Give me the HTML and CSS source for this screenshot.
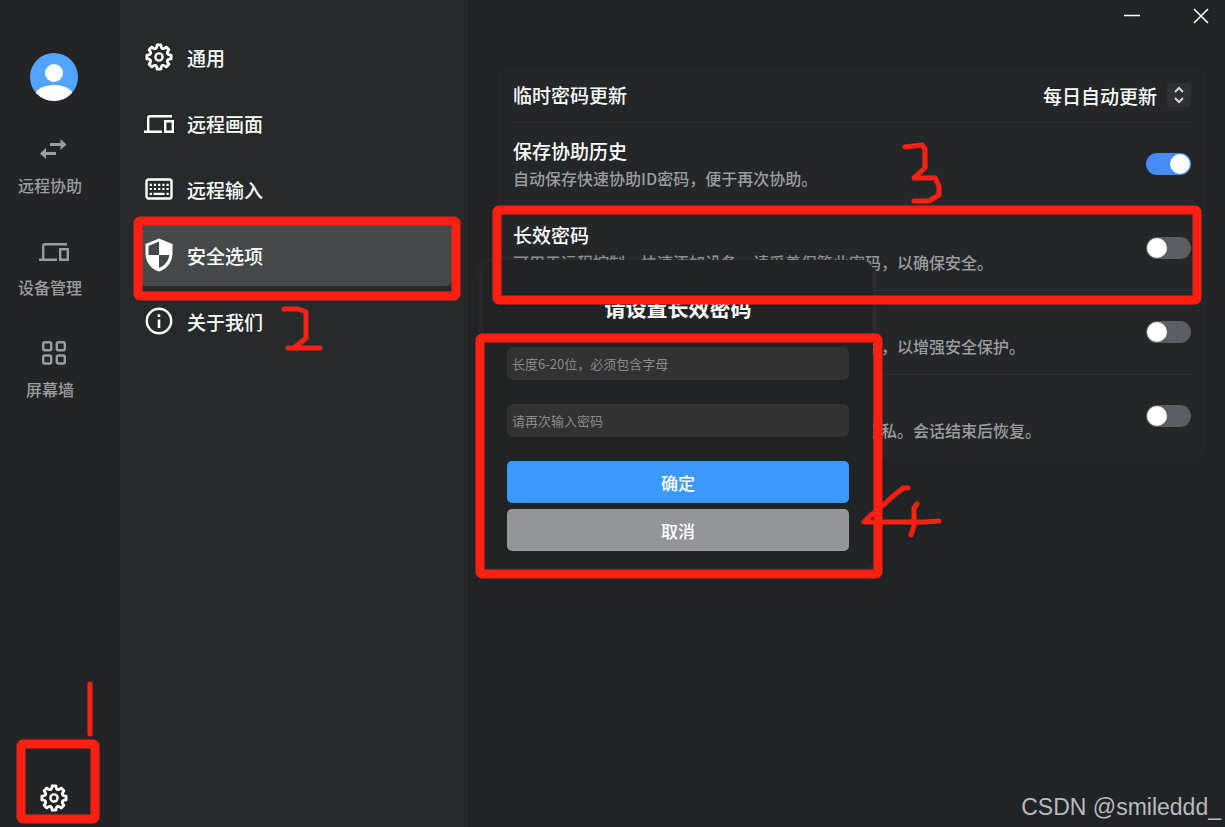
FILE: index.html
```html
<!DOCTYPE html>
<html lang="zh-CN">
<head>
    <meta charset="UTF-8">
    <title>安全选项</title>
    <meta name="viewport" content="width=device-width, initial-scale=1">
    <link rel="stylesheet" href="styles.css">
</head>
<body>
    <svg class="symbols" aria-hidden="true">
        <symbol id="gear" viewBox="-14 -14 28 28">
            <path fill="none" stroke="currentColor" stroke-width="2.800" stroke-linejoin="round" d="M-1.900-12.100H1.900Q2.400-5.800 7.210-9.900L9.900-7.210Q5.800-2.400 12.100-1.900V1.900Q5.800 2.400 9.900 7.210L7.210 9.900Q2.400 5.800 1.900 12.100H-1.900Q-2.400 5.800-7.210 9.900L-9.900 7.210Q-5.800 2.400-12.100 1.900V-1.900Q-5.800-2.400-9.900-7.210L-7.210-9.900Q-2.400-5.800-1.900-12.100Z"/>
            <circle r="3.600" fill="none" stroke="currentColor" stroke-width="2.400"/>
        </symbol>
        <symbol id="devices" viewBox="0 0 30 20">
            <path fill="none" stroke="currentColor" stroke-width="2.400" d="M28 2.200H6Q4.200 2.200 4.200 4V17.800M0 17.800H18M21.200 7.200H28.800V17.800H21.200Z"/>
        </symbol>
    </svg>

    <div class="app">
        <aside class="sidebar">
            <svg class="avatar" viewBox="0 0 48 48">
                <clipPath id="round"><circle cx="24" cy="24" r="24"/></clipPath>
                <g clip-path="url(#round)">
                    <rect width="48" height="48" fill="#52a5ff"/>
                    <circle cx="24" cy="20" r="9" fill="#fff"/>
                    <ellipse cx="24" cy="46" rx="21" ry="14" fill="#fff"/>
                </g>
            </svg>
            <a class="side-link" href="#assist">
                <svg viewBox="0 0 30 28"><path fill="currentColor" d="M11 8H21.500V4L27.500 9.500L21.500 15V11H11ZM17 17H7V13L1 18.500L7 24V20H17Z"/></svg>
                <span>远程协助</span>
            </a>
            <a class="side-link" href="#devices">
                <svg viewBox="0 -5 30 28"><use href="#devices" width="30" height="20"/></svg>
                <span>设备管理</span>
            </a>
            <a class="side-link" href="#wall">
                <svg viewBox="0 0 30 28"><g fill="none" stroke="currentColor" stroke-width="2.400"><rect x="4.200" y="3.200" width="8" height="8" rx="1.500"/><rect x="17.800" y="3.200" width="8" height="8" rx="1.500"/><rect x="4.200" y="16.500" width="8" height="8" rx="1.500"/><rect x="17.800" y="16.500" width="8" height="8" rx="1.500"/></g></svg>
                <span>屏幕墙</span>
            </a>
            <a class="side-settings" href="#settings" aria-label="设置">
                <svg><use href="#gear"/></svg>
            </a>
        </aside>

        <nav class="menu">
            <a href="#general">
                <svg><use href="#gear"/></svg>
                <span>通用</span>
            </a>
            <a href="#screen">
                <svg viewBox="0 -5 30 28"><use href="#devices" width="30" height="20"/></svg>
                <span>远程画面</span>
            </a>
            <a href="#input">
                <svg viewBox="0 0 28 28">
                    <rect x="1.500" y="4.500" width="25" height="19" rx="2" fill="none" stroke="currentColor" stroke-width="2.400"/>
                    <path stroke="currentColor" stroke-width="2.200" stroke-dasharray="2.200 2" d="M4.700 9.800H24M4.700 14H24"/>
                    <path stroke="currentColor" stroke-width="2.200" d="M4.700 18.800H6.900M8.500 18.800H19.500M21.500 18.800H23.700"/>
                </svg>
                <span>远程输入</span>
            </a>
            <a class="active" href="#security">
                <svg class="shield" viewBox="0 0 28 34">
                    <path fill="currentColor" fill-rule="evenodd" d="M14 0.500L27.500 6V15C27.500 24 22 31 14 33.500C6 31 0.500 24 0.500 15V6ZM14 3.500L3.500 8V17H14ZM14 17V30C19.500 28 23.500 23 24.300 17Z"/>
                </svg>
                <span>安全选项</span>
            </a>
            <a href="#about">
                <svg viewBox="0 0 28 28">
                    <circle cx="14" cy="14" r="12.200" fill="none" stroke="currentColor" stroke-width="2.400"/>
                    <path stroke="currentColor" stroke-width="2.600" d="M14 7.300V10M14 12.500V21"/>
                </svg>
                <span>关于我们</span>
            </a>
        </nav>

        <main class="content">
            <header class="titlebar">
                <button type="button" aria-label="最小化"><svg viewBox="0 0 16 16"><path d="M0 7.500H16"/></svg></button>
                <button type="button" aria-label="关闭"><svg viewBox="0 0 16 16"><path d="M1 1L15 15M15 1L1 15"/></svg></button>
            </header>

            <section class="card">
                <div class="row row-short">
                    <label class="title" for="refresh">临时密码更新</label>
                    <div class="picker">
                        <select id="refresh">
                            <option>每日自动更新</option>
                        </select>
                        <svg viewBox="0 0 24 24"><path d="M8 9L12 5L16 9M8 15L12 19L16 15"/></svg>
                    </div>
                </div>
                <div class="row">
                    <label for="history">
                        <span class="title">保存协助历史</span>
                        <span class="desc">自动保存快速协助ID密码，便于再次协助。</span>
                    </label>
                    <input class="switch" type="checkbox" id="history" checked>
                </div>
                <div class="row">
                    <label for="longterm">
                        <span class="title">长效密码</span>
                        <span class="desc">可用于远程控制、快速添加设备。请妥善保管此密码，以确保安全。</span>
                    </label>
                    <input class="switch" type="checkbox" id="longterm">
                </div>
                <div class="row">
                    <label for="verify">
                        <span class="title">二次验证</span>
                        <span class="desc">开启后，首次远程协助时需二次验证陌生的登录设备，以增强安全保护。</span>
                    </label>
                    <input class="switch" type="checkbox" id="verify">
                </div>
                <div class="row">
                    <label for="privacy">
                        <span class="title">隐私屏</span>
                        <span class="desc">远程会话时会自动开启隐私屏，避免旁人偷看保护隐私。会话结束后恢复。</span>
                    </label>
                    <input class="switch" type="checkbox" id="privacy">
                </div>
            </section>

            <form class="dialog">
                <h2>请设置长效密码</h2>
                <input type="password" placeholder="长度6-20位，必须包含字母" aria-label="密码">
                <input type="password" placeholder="请再次输入密码" aria-label="确认密码">
                <button class="confirm" type="submit">确定</button>
                <button class="cancel" type="button">取消</button>
            </form>
        </main>
    </div>

    <!-- step marks drawn over the window -->
    <svg class="marks" aria-hidden="true">
        <rect x="21" y="744" width="74" height="75" rx="2"/>
        <rect x="138" y="221" width="318" height="75" rx="2"/>
        <rect x="497" y="210" width="700" height="90" rx="2"/>
        <rect x="480" y="338" width="398" height="236" rx="2"/>
        <g class="pen">
            <path d="M90 684V734"/>
            <path d="M284 309H298L306 312V338L294 348M288 348H320"/>
            <path d="M905 147L922 145L925 149V168L914 178H935L939 186V195L929 201H914"/>
            <path d="M908 488H903L892 497L880 508L870 516L864 522H924L939 521M917 504L914 508V526L911 535"/>
        </g>
    </svg>
    <div class="watermark">CSDN @smileddd_</div>
</body>
</html>
```
FILE: styles.css
```css
* {
    box-sizing: border-box;
}

body {
    margin: 0;
    background: #202427;
    color: #fff;
    font-family: "Noto Sans CJK SC", sans-serif;
    font-size: 19px;
    font-weight: 500;
}

a {
    color: inherit;
    text-decoration: none;
}

button,
input,
select {
    font-family: inherit;
    font-weight: inherit;
}

.symbols {
    display: none;
}

.app {
    display: grid;
    grid-template-columns: 120px 348px 1fr;
    min-height: 100vh;
}

/* left bar */
.sidebar {
    display: flex;
    flex-direction: column;
    align-items: center;
    padding: 53px 20px 15px 0;
    background: #232426;
}

.avatar {
    width: 48px;
    height: 48px;
    margin: 0 0 34px 8px;
}

.side-link {
    display: flex;
    flex-direction: column;
    align-items: center;
    height: 102px;
    color: #9b9c9d;
    font-size: 16px;
    line-height: 24px;
}

.side-link svg {
    width: 30px;
    height: 28px;
    margin: 0 0 10px 8px;
}

.side-settings {
    margin: auto 0 0 8px;
}

.side-settings svg {
    display: block;
    width: 28px;
    height: 28px;
}

/* settings menu */
.menu {
    display: flex;
    flex-direction: column;
    gap: 4px;
    padding: 26px 16px;
    background: #262a2a;
}

.menu a {
    display: flex;
    align-items: center;
    gap: 13px;
    height: 62px;
    padding-left: 8px;
    border-radius: 6px;
}

.menu a.active {
    background: #454949;
}

.menu svg {
    width: 30px;
    height: 28px;
}

.menu .shield {
    height: 34px;
}

/* right side */
.content {
    position: relative;
    padding: 0 19px 0 30px;
}

.titlebar {
    display: flex;
    justify-content: flex-end;
    gap: 21px;
    height: 68px;
    margin-right: -19px;
}

.titlebar button {
    width: 48px;
    height: 32px;
    padding: 0;
    border: none;
    background: none;
}

.titlebar svg {
    display: block;
    width: 16px;
    height: 16px;
    margin: auto;
    fill: none;
    stroke: #fff;
    stroke-width: 1.5;
}

.card {
    padding: 0 15px;
    border-radius: 8px;
    background: #23272a;
}

.row {
    display: flex;
    align-items: center;
    justify-content: space-between;
    height: 84px;
    padding-bottom: 2px;
    border-bottom: 1px solid #2d3134;
}

.row:last-child {
    border-bottom: none;
}

.row-short {
    height: 55px;
    padding-bottom: 0;
}

.title {
    display: block;
    line-height: 28px;
}

.desc {
    display: block;
    color: #9b9c9d;
    font-size: 16px;
    line-height: 26px;
    white-space: nowrap;
}

.picker {
    display: flex;
    align-items: center;
    gap: 9px;
}

.picker select {
    appearance: none;
    padding: 0;
    border: none;
    background: none;
    color: #fff;
    font-size: 19px;
}

.picker svg {
    width: 24px;
    height: 24px;
    border-radius: 4px;
    background: #2e3134;
    fill: none;
    stroke: #d5d6d7;
    stroke-width: 2;
}

.switch {
    appearance: none;
    flex: none;
    width: 45px;
    height: 22px;
    margin: 0;
    padding: 1px;
    border-radius: 11px;
    background: #5b5e63;
}

.switch::before {
    content: "";
    display: block;
    width: 20px;
    height: 20px;
    border-radius: 50%;
    background: #fff;
}

.switch:checked {
    background: #468cf7;
}

.switch:checked::before {
    margin-left: auto;
}

/* password dialog */
.dialog {
    position: absolute;
    top: 260px;
    left: 15px;
    width: 390px;
    padding: 31px 24px 19px;
    border-radius: 12px;
    background: #202427;
    box-shadow: 0 0 8px rgba(60, 65, 68, 0.6);
}

.dialog h2 {
    margin: 0 0 24px;
    font-size: 21px;
    font-weight: 700;
    line-height: 32px;
    text-align: center;
}

.dialog input {
    display: block;
    width: 100%;
    height: 33px;
    margin-bottom: 24px;
    padding: 0 5px;
    border: none;
    border-radius: 6px;
    background: #323232;
    color: #fff;
    font-size: 13px;
    font-weight: 400;
}

.dialog input::placeholder {
    color: #8a8a8a;
}

.dialog button {
    display: block;
    width: 100%;
    height: 42px;
    padding: 0;
    border: none;
    border-radius: 5px;
    color: #fff;
    font-size: 17px;
}

.dialog .confirm {
    margin-bottom: 6px;
    background: #3b99fc;
}

.dialog .cancel {
    background: #949598;
}

.marks {
    position: absolute;
    top: 0;
    left: 0;
    width: 100%;
    height: 100%;
    fill: none;
    stroke: #ff2012;
    stroke-width: 9;
    pointer-events: none;
}

.pen {
    stroke-width: 5;
    stroke-linecap: round;
    stroke-linejoin: round;
}

.watermark {
    position: absolute;
    right: 4px;
    bottom: 6px;
    color: #b9babb;
    font-family: "Liberation Sans", sans-serif;
    font-size: 23px;
    font-weight: 400;
    line-height: 28px;
}
```
